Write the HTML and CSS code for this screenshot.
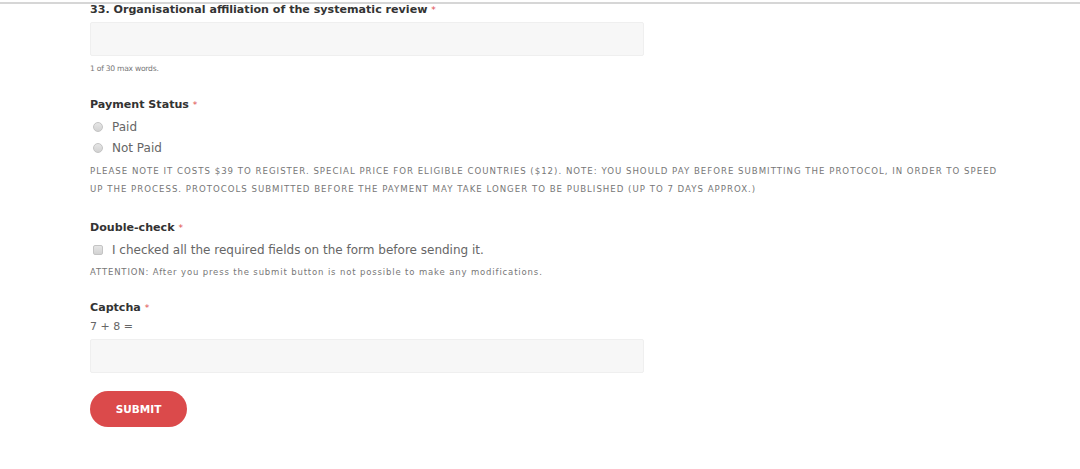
FILE: index.html
```html
<!DOCTYPE html>
<html lang="en">
   <head>
      <meta charset="utf-8">
      <title>Protocol Registration</title>
      <link rel="stylesheet" href="styles.css">
   </head>
   <body>
      <div class="topline"></div>

      <!-- Registration form (end) -->
      <form class="reg-form">
        <div class="field">
            <label class="field-label" for="affiliation">33. Organisational affiliation of the systematic review <span class="req">*</span></label>
            <input type="text" id="affiliation" class="field-input">
            <div class="field-help">1 of 30 max words.</div>
        </div>

        <div class="field">
            <div class="field-label">Payment Status <span class="req">*</span></div>
            <label class="choice"><input type="radio" name="payment"> Paid</label>
            <label class="choice"><input type="radio" name="payment"> Not Paid</label>
            <div class="field-note">Please note it costs $39 to register. Special price for eligible countries ($12). Note: You should pay before submitting the protocol, in order to speed up the process. Protocols submitted before the payment may take longer to be published (up to 7 days approx.)</div>
        </div>

        <div class="field">
            <div class="field-label">Double-check <span class="req">*</span></div>
            <label class="choice"><input type="checkbox"> I checked all the required fields on the form before sending it.</label>
            <div class="field-help attention">ATTENTION: After you press the submit button is not possible to make any modifications.</div>
        </div>

        <div class="field field-last">
            <label class="field-label" for="captcha">Captcha <span class="req">*</span></label>
            <div class="captcha-q">7 + 8 =</div>
            <input type="text" id="captcha" class="field-input">
        </div>

        <button type="button" class="btn-submit">SUBMIT</button>
      </form>
   </body>
</html>
```

FILE: styles.css
```css
/* Global Styles */
body {
    font-family: "DejaVu Sans", sans-serif;
    margin: 0;
    padding: 0;
    background-color: #fff;
    color: #666;
}

.topline {
    height: 2px;
    margin-top: 2px;
    background-color: #d6d6d6;
}

/* Form Styles */
.reg-form {
    padding: 0 0 0 90px;
}

.field {
    margin-bottom: 24px;
}

.field-last {
    margin-bottom: 18px;
}

.field-label {
    display: block;
    font-size: 11.1px;
    font-weight: bold;
    color: #333;
    line-height: 12px;
    margin-bottom: 5px;
}

label.field-label {
    margin-bottom: 6px;
}

.req {
    color: #e05050;
    font-weight: normal;
    font-size: 9px;
}

.field-input {
    display: block;
    box-sizing: border-box;
    width: 554px;
    height: 34px;
    margin: 0;
    background-color: #f7f7f7;
    border: 1px solid #efefef;
    border-radius: 2px;
}

.field-help {
    font-size: 7.6px;
    letter-spacing: -0.25px;
    color: #777;
    line-height: 12px;
}

.field-input + .field-help {
    margin-top: 7px;
}

.choice {
    display: flex;
    align-items: center;
    font-size: 12px;
    color: #666;
    height: 21px;
}

.choice input {
    -webkit-appearance: none;
    appearance: none;
    box-sizing: border-box;
    margin: 0 9px 0 3px;
    width: 10px;
    height: 10px;
    border: 1px solid #c4c4c4;
    background: linear-gradient(#e6e6e6, #d2d2d2);
}

.choice input[type="radio"] {
    border-radius: 50%;
}

.choice input[type="checkbox"] {
    border-radius: 2px;
}

.field-note {
    text-transform: uppercase;
    font-size: 8.6px;
    letter-spacing: 1px;
    color: #777;
    line-height: 18px;
    margin-top: 4px;
    width: 912px;
}

.attention {
    margin-top: 6px;
    font-size: 8.5px;
    letter-spacing: 0.85px;
}

.captcha-q {
    font-size: 11px;
    color: #666;
    line-height: 14px;
    margin-bottom: 5px;
}

.btn-submit {
    display: block;
    width: 97px;
    height: 36px;
    border: none;
    border-radius: 18px;
    background-color: #db4a4b;
    color: #fff;
    font-family: "DejaVu Sans", sans-serif;
    font-weight: bold;
    font-size: 10.5px;
}
```
